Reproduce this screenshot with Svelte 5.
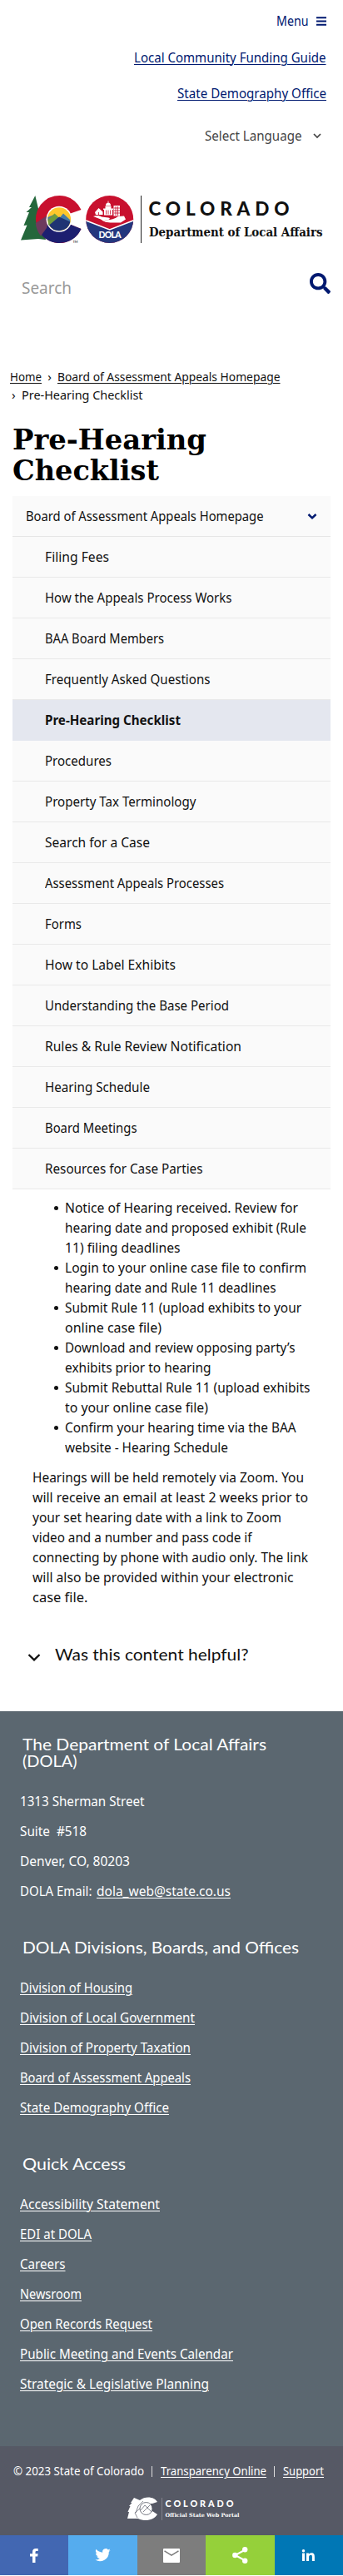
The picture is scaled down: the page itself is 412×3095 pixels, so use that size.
<script>
  function fit(node, width) {
    const natural = node.getBoundingClientRect().width;
    node.style.width = `${width}px`;
    node.style.transform = `scaleX(${width / natural})`;
  }

  const sections = [
    ['Filing Fees', 77],
    ['How the Appeals Process Works', 224.5],
    ['BAA Board Members', 143],
    ['Frequently Asked Questions', 198.5],
    ['Pre-Hearing Checklist', 163],
    ['Procedures', 80],
    ['Property Tax Terminology', 181.5],
    ['Search for a Case', 126],
    ['Assessment Appeals Processes', 215],
    ['Forms', 44],
    ['How to Label Exhibits', 157],
    ['Understanding the Base Period', 221],
    ['Rules & Rule Review Notification', 236],
    ['Hearing Schedule', 126],
    ['Board Meetings', 110.5],
    ['Resources for Case Parties', 189.5]
  ];

  const steps = [
    [['Notice of Hearing received. Review for', 280], ['hearing date and proposed exhibit (Rule', 290], ['11) filing deadlines', 138.5]],
    [['Login to your online case file to confirm', 290], ['hearing date and Rule 11 deadlines', 253.5]],
    [['Submit Rule 11 (upload exhibits to your', 284], ['online case file)', 116]],
    [['Download and review opposing party’s', 276.5], ['exhibits prior to hearing', 175.5]],
    [['Submit Rebuttal Rule 11 (upload exhibits', 294.5], ['to your online case file)', 172]],
    [['Confirm your hearing time via the BAA', 277.5], ['website - Hearing Schedule', 196]]
  ];

  const paragraph = [
    ['Hearings will be held remotely via Zoom. You', 326],
    ['will receive an email at least 2 weeks prior to', 331],
    ['your set hearing date with a link to Zoom', 299],
    ['video and a number and pass code if', 263.5],
    ['connecting by phone with audio only. The link', 331],
    ['will also be provided within your electronic', 313.5],
    ['case file.', 66.5]
  ];

  const address = [['1313 Sherman Street', 149.5], ['Suite  #518', 80], ['Denver, CO, 80203', 132]];

  const divisions = [
    ['Division of Housing', 135],
    ['Division of Local Government', 210],
    ['Division of Property Taxation', 205],
    ['Board of Assessment Appeals', 205],
    ['State Demography Office', 179]
  ];

  const quick = [
    ['Accessibility Statement', 168],
    ['EDI at DOLA', 86],
    ['Careers', 54.5],
    ['Newsroom', 74],
    ['Open Records Request', 159],
    ['Public Meeting and Events Calendar', 256],
    ['Strategic & Legislative Planning', 227]
  ];
</script>

<div class="page">
  <header>
    <div class="util menu">
      <span class="fit" use:fit={38.5}>Menu</span>
      <svg width="12" height="11" viewBox="0 0 12 11"><path d="M0 1.2h12M0 5.5h12M0 9.8h12" stroke="#001970" stroke-width="2" /></svg>
    </div>
    <div class="util"><a class="fit" use:fit={230.5} href="#guide">Local Community Funding Guide</a></div>
    <div class="util"><a class="fit" use:fit={179} href="#demography">State Demography Office</a></div>
    <div class="util lang">
      <span class="fit" use:fit={116.5}>Select Language</span>
      <svg width="10" height="7" viewBox="0 0 10 7"><path d="M1 1l4 4 4-4" fill="none" stroke="#444" stroke-width="1.7" /></svg>
    </div>
    <svg class="logo" width="366" height="60" viewBox="24 234 366 60">
      <path d="M42.300 235L35 249h3l-6.500 6h3.500L28.500 271l4-.5L25 288.500l21-1.500 9 1z" fill="#24673b" />
      <path d="M97.500 252A28.500 28.500 0 1 0 97.500 275L84 269.500 83 257z" fill="#c8102e" />
      <path d="M44 272.500L59 263l12 6 13 .5 13.500 5.500A28.500 28.500 0 0 1 51 283.500z" fill="#1d1f70" />
      <path d="M42.800 268L61 256l-5 18-7 9.500A28 28 0 0 1 42.800 268z" fill="#6d3a5d" />
      <circle cx="71" cy="263.300" r="15.500" fill="#fff" />
      <circle cx="71" cy="263.300" r="14" fill="#ffc72c" />
      <path d="M57.300 261l8.700-3.500 5 5 5-6 8.500 8a14 14 0 0 1-27 1z" fill="#487ba5" />
      <path d="M58 264l7.500-7.500 4.500 4-8 9-4 1z" fill="#6f9b3c" />
      <path d="M59 270.500l12-10 13.500 6A14 14 0 0 1 59 270.500z" fill="#1f3473" />
      <text x="87.500" y="291.500" font-family="Lato" font-size="4" fill="#000">TM</text>
      <clipPath id="seal"><circle cx="131.700" cy="263.500" r="28.500" /></clipPath>
      <g clip-path="url(#seal)">
        <path d="M100 230h64v70h-64z" fill="#c8102e" />
        <path d="M102 264.500l29.700 12 29.700-12V294h-60z" fill="#24377e" />
        <path d="M102 264.500l29.700 11.500 29.700-11.500" fill="none" stroke="#fff" stroke-width="1.600" />
      </g>
      <g fill="#fff">
        <path d="M112 260c4-1.500 7-1.500 10 .5l8 1c3 .5 2 2.500-1 2.500h-5c7 1 12 0 18-4l7-.5 2 4-6 4h-10c-7 0-10-1-14-4z" />
        <path d="M114 255l4.500-5 5 4.500v3.500h-8.500zM125 252h10v6.500h-10zM126.500 247.500h7v3.500h-7zM124 250.500h12v1.500h-12zM127 247a3 3.500 0 0 1 6 0zM129.600 241.500h.8v3h-.8zM136.500 247h7.500v12.500h-7.500z" />
      </g>
      <path d="M127.500 252.500v5M130 252.500v5M132.500 252.500v5M139 248v11M141.500 248v11M137 250h7M137 253h7M137 256h7M118.500 255v3" stroke="#c8102e" stroke-width=".8" />
      <text x="118.500" y="286" textLength="27" font-family="Lato" font-weight="900" font-size="10.500" fill="#fff">DOLA</text>
      <path d="M169.500 235v57" stroke="#222" stroke-width="1" />
      <text x="178.500" y="259" textLength="169" font-family="Lato" font-weight="900" font-size="22.500" fill="#111">COLORADO</text>
      <text x="179" y="284" textLength="208.500" lengthAdjust="spacingAndGlyphs" font-family="DejaVu Serif Condensed, DejaVu Serif" font-weight="700" font-size="14.800" fill="#111">Department of Local Affairs</text>
    </svg>
    <div class="search">
      <span class="fit" use:fit={60}>Search</span>
      <svg width="25" height="25" viewBox="0 0 512 512"><path fill="#001970" d="M505 442.700L405.300 343c-4.500-4.500-10.600-7-17-7H372c27.600-35.300 44-79.700 44-128C416 93.100 322.900 0 208 0S0 93.100 0 208s93.100 208 208 208c48.300 0 92.700-16.400 128-44v16.300c0 6.400 2.500 12.500 7 17l99.700 99.700c9.400 9.400 24.600 9.400 33.900 0l28.300-28.300c9.400-9.400 9.400-24.600.1-34zM208 336c-70.700 0-128-57.200-128-128 0-70.700 57.200-128 128-128 70.700 0 128 57.200 128 128 0 70.700-57.200 128-128 128z" /></svg>
    </div>
  </header>

  <nav class="crumbs">
    <div><a class="fit" use:fit={38} href="#home">Home</a><i>›</i><a class="fit" use:fit={267.5} href="#baa">Board of Assessment Appeals Homepage</a></div>
    <div class="second"><i>›</i><span class="fit" use:fit={145.5}>Pre-Hearing Checklist</span></div>
  </nav>

  <h1><span class="fit" use:fit={233}>Pre-Hearing</span><br /><span class="fit" use:fit={176}>Checklist</span></h1>

  <nav class="side">
    <div class="top">
      <span class="fit" use:fit={285.5}>Board of Assessment Appeals Homepage</span>
      <svg width="12" height="9" viewBox="0 0 12 9"><path d="M1.500 2L6 6.300 10.500 2" fill="none" stroke="#001970" stroke-width="2.500" /></svg>
    </div>
    {#each sections as [label, w], i}
      <div class="item" class:active={i === 4}><span class="fit" use:fit={w}>{label}</span></div>
    {/each}
  </nav>

  <main>
    <ul>
      {#each steps as lines}
        <li>{#each lines as [line, w]}<div><span class="fit" use:fit={w}>{line}</span></div>{/each}</li>
      {/each}
    </ul>
    <p>{#each paragraph as [line, w]}<span class="line"><span class="fit" use:fit={w}>{line}</span></span>{/each}</p>
  </main>

  <div class="helpful">
    <svg width="16" height="11" viewBox="0 0 16 11"><path d="M1.500 2L8 8.300 14.500 2" fill="none" stroke="#111" stroke-width="2.300" /></svg>
    <span class="fit" use:fit={232.5}>Was this content helpful?</span>
  </div>

  <footer>
    <h2><span class="fit" use:fit={293}>The Department of Local Affairs</span><br /><span class="fit" use:fit={65.5}>(DOLA)</span></h2>
    <div class="rows">
      {#each address as [label, w]}<div><span class="fit" use:fit={w}>{label}</span></div>{/each}
      <div class="email"><span class="fit" use:fit={86.5}>DOLA Email:</span><a class="fit" use:fit={161} href="#mail">dola_web@state.co.us</a></div>
    </div>
    <h2><span class="fit" use:fit={332}>DOLA Divisions, Boards, and Offices</span></h2>
    <div class="rows">
      {#each divisions as [label, w]}<div><a class="fit" use:fit={w} href="#division">{label}</a></div>{/each}
    </div>
    <h2><span class="fit" use:fit={124}>Quick Access</span></h2>
    <div class="rows">
      {#each quick as [label, w]}<div><a class="fit" use:fit={w} href="#quick">{label}</a></div>{/each}
    </div>
  </footer>

  <div class="legal">
    <div class="copy">
      <span class="fit" use:fit={157}>© 2023 State of Colorado</span><b></b><a class="fit" use:fit={127} href="#tops">Transparency Online</a><b></b><a class="fit" use:fit={49} href="#support">Support</a>
    </div>
    <svg class="portal" width="140" height="30" viewBox="152 3000 140 30">
      <path d="M161 3001l-4 6h1.500l-3.500 4h1.500l-3 7h1.500l-2 8h13c8 4 19 2 23-5l-6-4c-7 4-11-9 0-9l6-2c-3-6-14-8-21-2z" fill="#fff" />
      <circle cx="175.500" cy="3014" r="7.500" fill="#fff" stroke="#565965" stroke-width=".8" />
      <path d="M169 3016l5-6 8 8M172 3018l8-8M168 3014l-6 5 3 6M163 3019l3-8 6-6" fill="none" stroke="#565965" stroke-width=".7" />
      <path d="M194.500 3001v27" stroke="#8b8d96" stroke-width=".8" />
      <text x="198.500" y="3012" textLength="82" font-family="Lato" font-weight="900" font-size="10.800" fill="#fff">COLORADO</text>
      <text x="198.500" y="3024" textLength="89" lengthAdjust="spacingAndGlyphs" font-family="DejaVu Serif Condensed, DejaVu Serif" font-weight="700" font-size="6.300" fill="#fff">Official State Web Portal</text>
    </svg>
  </div>

  <div class="share">
    <span style:background="#4267b2"><svg width="10" height="17" viewBox="0 0 10 17"><path fill="#fff" d="M3 17V9.500H0V6.300h3V4.200C3 1.300 4.500 0 7 0h2.700v3H8C7 3 6.500 3.400 6.500 4.300v2H9.600L9.200 9.500H6.500V17z" /></svg></span>
    <span style:background="#55acee"><svg width="19" height="16" viewBox="0 0 24 20"><path fill="#fff" d="M23.600 2.400c-.9.400-1.800.6-2.700.8 1-.6 1.700-1.500 2.100-2.600-.9.500-1.900.9-3 1.100A4.800 4.800 0 0 0 11.700 6 13.600 13.600 0 0 1 1.900 1a4.800 4.800 0 0 0 1.500 6.400c-.8 0-1.500-.2-2.200-.6 0 2.300 1.600 4.300 3.900 4.800-.7.200-1.400.2-2.200.1a4.800 4.800 0 0 0 4.500 3.300A9.600 9.600 0 0 1 .4 17 13.600 13.600 0 0 0 21.200 4.900c.9-.7 1.700-1.500 2.400-2.500z" /></svg></span>
    <span style:background="#7d7d7d"><svg width="20" height="17" viewBox="0 0 20 17"><rect width="20" height="17" rx="1" fill="#fff" /><path d="M1.500 2.800L10 8.200l8.500-5.400" fill="none" stroke="#7d7d7d" stroke-width="1.500" /></svg></span>
    <span style:background="#95d03a"><svg width="19" height="20" viewBox="0 0 19 20"><path d="M15.500 3.500L3.500 10l12 6.500" fill="none" stroke="#fff" stroke-width="2" /><g fill="#fff"><circle cx="15.200" cy="3.300" r="3.200" /><circle cx="3.300" cy="10" r="3.200" /><circle cx="15.200" cy="16.700" r="3.200" /></g></svg></span>
    <span style:background="#0077b5"><svg width="15" height="14" viewBox="0 0 15 14"><path fill="#fff" d="M0 4.500h3V14H0zM1.500 0a1.700 1.700 0 1 1 0 3.500A1.700 1.700 0 0 1 1.500 0zM5 4.500h2.900v1.300C8.400 5 9.400 4.200 11 4.200c3.200 0 3.900 2 3.900 4.700V14h-3V9.300c0-1.200 0-2.500-1.500-2.500S8.100 8 8.100 9.200V14H5z" /></svg></span>
  </div>
</div>

<style>
  :global(body) { margin: 0; background: #fff; }
  .page { width: 412px; height: 3095px; font: 16px/24px "Noto Sans", sans-serif; color: #111; }
  .fit { display: inline-block; white-space: pre; transform-origin: 0 50%; }
  a { color: inherit; text-decoration: underline; text-decoration-thickness: 1px; text-underline-offset: 2px; }
  svg { display: block; flex: none; overflow: visible; }

  header { height: 432px; padding-top: 3px; box-sizing: border-box; color: #001970; }
  .util { display: flex; align-items: center; justify-content: flex-end; height: 44px; padding-right: 20.500px; }
  .menu { gap: 9.500px; }
  .menu + .util { height: 43px; }
  .lang { height: 58px; padding-right: 26px; gap: 13.500px; color: #444; }
  .logo { margin: 42px 0 0 24px; }
  .search { display: flex; justify-content: space-between; align-items: flex-start; margin-top: 34px; padding: 0 15px 0 26px; font-size: 20px; color: #999; }
  .search span { margin-top: 6px; }

  .crumbs { height: 78px; padding: 9px 0 0 12px; font-size: 15px; line-height: 22px; box-sizing: border-box; }
  .crumbs div { display: flex; }
  .crumbs i { width: 19px; text-align: center; font-style: normal; }
  .crumbs .second i { width: 13.500px; text-align: left; text-indent: 2px; }

  h1 { height: 86px; margin: 0 0 0 15px; font: 700 34px/37px "DejaVu Serif Condensed", "DejaVu Serif", serif; color: #000; }
  h1 .fit { vertical-align: top; }

  .side { margin: 0 15px; background: #fafafa; }
  .top { display: flex; justify-content: space-between; align-items: center; height: 48px; padding: 0 16px; border-bottom: 1px solid #e6e6e6; }
  .item { height: 48px; padding-left: 38.500px; line-height: 48px; border-bottom: 1px solid #e9e9e9; }
  .active { background: #e4e7ef; font-weight: 700; border-color: #e4e7ef; }
  .item .fit { vertical-align: top; }

  ul { margin: 10px 0 0 78px; padding: 0; list-style: none; }
  li { position: relative; }
  li::before { content: ""; position: absolute; left: -13px; top: 10px; width: 5px; height: 5px; border-radius: 50%; background: #111; }
  p { margin: 12px 0 0 38.500px; }
  .line { display: block; }
  .line .fit, li .fit { vertical-align: top; }

  .helpful { display: flex; align-items: center; gap: 16.500px; height: 48px; margin: 32px 0 45px 33px; font: 20px/24px Lato, sans-serif; }
  .helpful svg { margin-top: 8px; }

  footer { height: 883px; padding: 28.500px 0 0 24px; background: #5b6770; color: #fff; box-sizing: border-box; }
  footer h2 { margin: 0 0 0 3px; font: 20px/20px Lato, sans-serif; }
  h2 .fit, .rows .fit { vertical-align: top; }
  .rows { padding: 27px 0 33px; }
  .rows > div { height: 36px; }
  .email { display: flex; gap: 5.500px; }

  .legal { height: 107px; background: #565965; color: #fff; display: flow-root; }
  .copy { display: flex; align-items: center; padding: 18px 0 0 16px; font-size: 14px; }
  .copy b { width: 1px; height: 13px; margin: 0 10px 0 9px; background: #ddd; }
  .portal { margin: 19px 0 0 152px; }
  .share { display: grid; grid-template-columns: repeat(5, 1fr); height: 48px; }
  .share span { display: grid; place-items: center; }
</style>
